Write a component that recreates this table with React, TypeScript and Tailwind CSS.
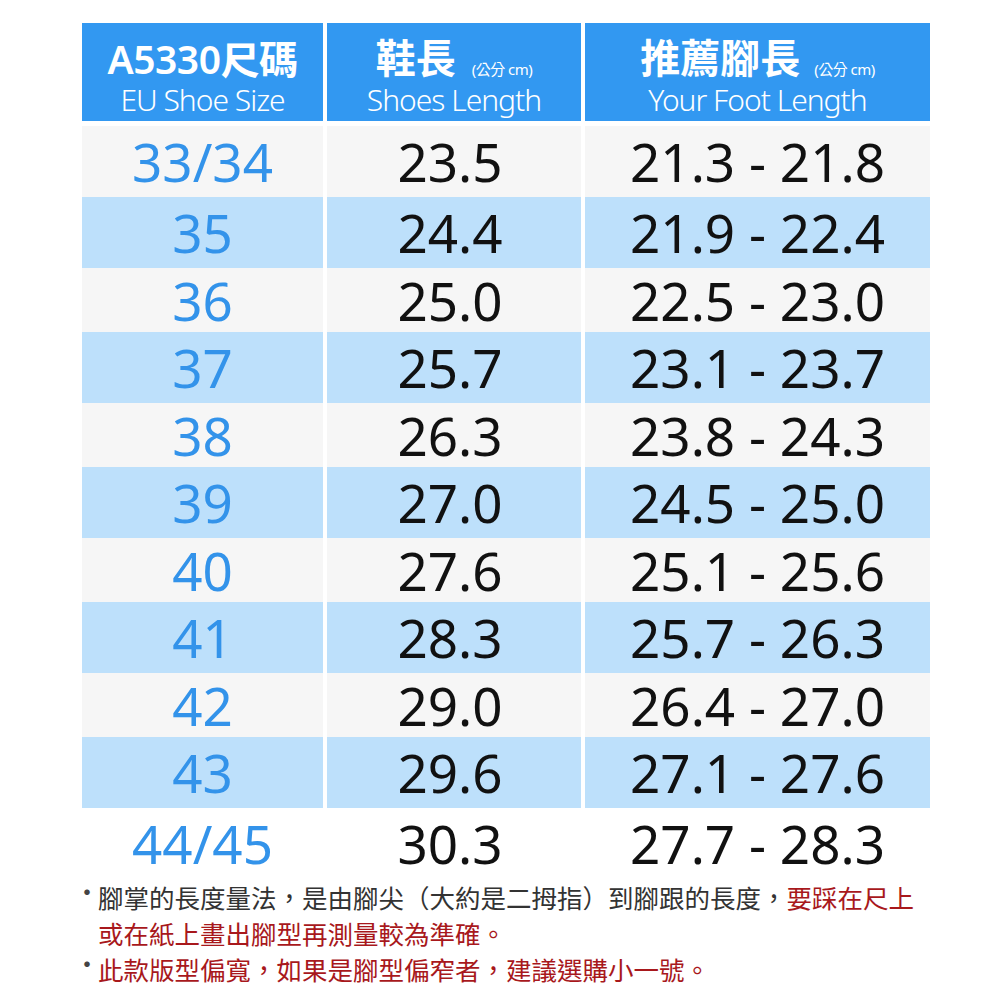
import React from "react";

const rows: [string, string, string][] = [
  ["33/34", "23.5", "21.3 - 21.8"],
  ["35", "24.4", "21.9 - 22.4"],
  ["36", "25.0", "22.5 - 23.0"],
  ["37", "25.7", "23.1 - 23.7"],
  ["38", "26.3", "23.8 - 24.3"],
  ["39", "27.0", "24.5 - 25.0"],
  ["40", "27.6", "25.1 - 25.6"],
  ["41", "28.3", "25.7 - 26.3"],
  ["42", "29.0", "26.4 - 27.0"],
  ["43", "29.6", "27.1 - 27.6"],
  ["44/45", "30.3", "27.7 - 28.3"],
];

const font = { fontFamily: '"Noto Sans", "Noto Sans CJK TC", sans-serif' };

export default function App() {
  return (
    <div className="w-[1000px] h-[1000px] bg-white relative overflow-hidden" style={font}>
      <div className="pt-[23px] pl-[82px]">
        {/* header */}
        <div className="grid grid-cols-[241px_254px_345px] gap-x-[4px] h-[98px]">
          <div className="bg-[#3298f1] flex flex-col items-center text-white pt-[14px]">
            <div className="h-[42px] flex items-center text-[39px] font-semibold leading-none tracking-[-0.5px]">
              A5330尺碼
            </div>
            <div className="h-[42px] flex items-center text-[30px] font-light leading-none tracking-[-1px]">
              EU Shoe Size
            </div>
          </div>
          <div className="bg-[#3298f1] flex flex-col items-center text-white pt-[14px]">
            <div className="h-[42px] flex items-center">
              <span className="text-[40px] font-bold leading-none">鞋長</span>
              <span className="text-[15px] leading-none ml-[16px] mt-[22px] tracking-[-0.5px]">(公分 cm)</span>
            </div>
            <div className="h-[42px] flex items-center text-[30px] font-light leading-none tracking-[-1px]">
              Shoes Length
            </div>
          </div>
          <div className="bg-[#3298f1] flex flex-col items-center text-white pt-[14px]">
            <div className="h-[42px] flex items-center">
              <span className="text-[40px] font-bold leading-none">推薦腳長</span>
              <span className="text-[15px] leading-none ml-[14px] mt-[22px] tracking-[-0.5px]">(公分 cm)</span>
            </div>
            <div className="h-[42px] flex items-center text-[30px] font-light leading-none tracking-[-1px]">
              Your Foot Length
            </div>
          </div>
        </div>

        {/* body */}
        <div className="mt-[5px] flex flex-col">
          {rows.map((r, i) => {
            const blue = i % 2 === 1;
            const last = i === rows.length - 1;
            const bg = blue ? "bg-[#bde0fb]" : last ? "bg-white" : "bg-[#f6f6f6]";
            const h = blue || i === 0 || last ? "h-[71px]" : "h-[64px]";
            return (
              <div key={r[0]} className={`grid grid-cols-[241px_254px_345px] gap-x-[4px] ${h}`}>
                <div className={`${bg} flex items-center justify-center text-[#3393ea] text-[53px] leading-none`}>
                  {r[0]}
                </div>
                <div className={`${bg} flex items-center justify-center text-[#111] text-[53px] leading-none pr-[8px]`}>
                  {r[1]}
                </div>
                <div className={`${bg} flex items-center justify-center text-[#111] text-[53px] leading-none`}>
                  {r[2]}
                </div>
              </div>
            );
          })}
        </div>
      </div>

      {/* notes */}
      <div
        className="absolute left-[74px] top-[879px] text-[25.5px] leading-[36px] text-[#333]"
        style={{ fontFamily: '"Noto Sans CJK TC", "Noto Sans", sans-serif' }}
      >
        <div className="flex">
          <span className="w-[24px] text-[26px] leading-[24px] text-[#444]">•</span>
          <div>
            <span>腳掌的長度量法，是由腳尖（大約是二拇指）到腳跟的長度，</span>
            <span className="text-[#a8181c]">要踩在尺上</span>
            <br />
            <span className="text-[#a8181c]">或在紙上畫出腳型再測量較為準確。</span>
          </div>
        </div>
        <div className="flex">
          <span className="w-[24px] text-[26px] leading-[24px] text-[#444]">•</span>
          <div className="text-[#a8181c]">此款版型偏寬，如果是腳型偏窄者，建議選購小一號。</div>
        </div>
      </div>
    </div>
  );
}
